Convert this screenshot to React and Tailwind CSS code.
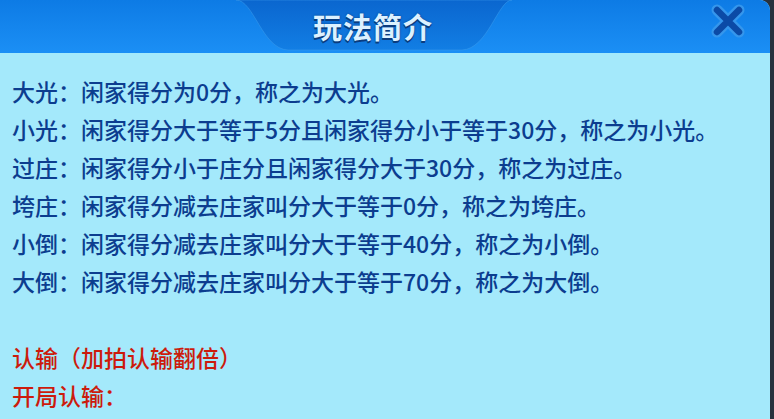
import React from "react";

const rules = [
  "大光：闲家得分为0分，称之为大光。",
  "小光：闲家得分大于等于5分且闲家得分小于等于30分，称之为小光。",
  "过庄：闲家得分小于庄分且闲家得分大于30分，称之为过庄。",
  "垮庄：闲家得分减去庄家叫分大于等于0分，称之为垮庄。",
  "小倒：闲家得分减去庄家叫分大于等于40分，称之为小倒。",
  "大倒：闲家得分减去庄家叫分大于等于70分，称之为大倒。",
];

const CloseIcon = () => (
  <svg width="36" height="36" viewBox="0 0 36 36">
    <g strokeLinecap="round">
      <path d="M7 7 L29 29 M29 7 L7 29" stroke="#3596ec" strokeWidth="11" />
      <path d="M7 7 L29 29 M29 7 L7 29" stroke="#0b4aa6" strokeWidth="6.5" />
    </g>
  </svg>
);

const HeaderTab = () => (
  <svg className="absolute inset-0" width="770" height="53" viewBox="0 0 770 53">
    <defs>
      <linearGradient id="tab" x1="0" y1="0" x2="0" y2="1">
        <stop offset="0" stopColor="#0a66cf" />
        <stop offset="1" stopColor="#127ee4" />
      </linearGradient>
    </defs>
    <path
      d="M236 0 C254 0 262 49 288 50 L462 50 C488 49 498 0 512 0 Z"
      fill="url(#tab)"
      stroke="#3c9cec"
      strokeOpacity="0.5"
    />
  </svg>
);

export default function App() {
  return (
    <div className="flex w-[774px] h-[419px] overflow-hidden bg-[#27313d] font-['Noto_Sans_CJK_SC','Noto_Sans',sans-serif]">
      <div className="flex flex-col w-[770px] h-full bg-[#a4e9fb] rounded-tr-[10px] overflow-hidden">
        <div className="relative h-[53px] shrink-0 bg-gradient-to-b from-[#0d7be5] to-[#1b8ff5]">
          <HeaderTab />
          <div className="relative flex h-full items-center justify-center pr-[24px] pb-[1px]">
            <h1 className="text-[29px] font-bold leading-none tracking-[1px] text-[#dcf1ff] [text-shadow:0_2px_0_#0a3b7e,0_0_2px_#0a3b7e]">
              玩法简介
            </h1>
          </div>
          <button className="absolute right-[24px] top-[3px]">
            <CloseIcon />
          </button>
        </div>
        <div className="flex flex-col pl-[12px] pt-[19px] text-[23px] leading-[38px] font-medium">
          {rules.map((line) => (
            <p key={line} className="text-[#0c3d8f] whitespace-nowrap">
              {line}
            </p>
          ))}
          <p className="h-[38px]" />
          <p className="text-[#cc1b0c]">认输（加拍认输翻倍）</p>
          <p className="text-[#cc1b0c]">开局认输：</p>
        </div>
      </div>
    </div>
  );
}
